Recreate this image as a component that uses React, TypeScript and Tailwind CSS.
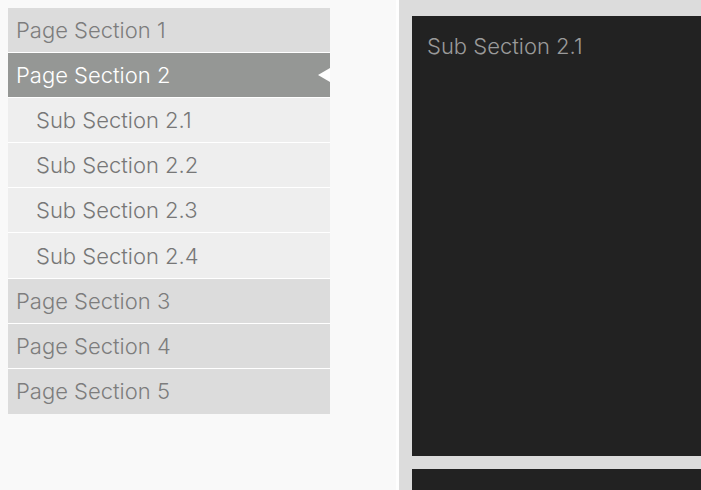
import React from "react";

const rows: { label: string; kind: "page" | "active" | "sub" }[] = [
  { label: "Page Section 1", kind: "page" },
  { label: "Page Section 2", kind: "active" },
  { label: "Sub Section 2.1", kind: "sub" },
  { label: "Sub Section 2.2", kind: "sub" },
  { label: "Sub Section 2.3", kind: "sub" },
  { label: "Sub Section 2.4", kind: "sub" },
  { label: "Page Section 3", kind: "page" },
  { label: "Page Section 4", kind: "page" },
  { label: "Page Section 5", kind: "page" },
];

export default function App() {
  return (
    <div
      className="flex w-[701px] h-[490px] overflow-hidden bg-[#f9f9f9]"
      style={{ fontFamily: "Inter, 'Noto Sans', sans-serif" }}
    >
      <div className="pt-2 pl-2 w-[330px] shrink-0">
        <ul className="flex flex-col">
          {rows.map((r) => (
            <li
              key={r.label}
              className={
                r.kind === "active"
                  ? "relative flex items-center h-[45.1px] border-b border-white bg-[#959795] text-white pl-2 text-[22px] font-light"
                  : r.kind === "sub"
                  ? "relative flex items-center h-[45.1px] border-b border-white bg-[#eeeeee] text-[#777777] pl-[28px] text-[22px] font-light"
                  : "relative flex items-center h-[45.1px] border-b border-white last:border-b-0 bg-[#dcdcdc] text-[#7d7d7d] pl-2 text-[22px] font-light"
              }
            >
              <span className="leading-[26px]">{r.label}</span>
              {r.kind === "active" && (
                <span className="absolute right-0 top-1/2 -translate-y-1/2 w-0 h-0 border-y-[7px] border-y-transparent border-r-[12px] border-r-white" />
              )}
            </li>
          ))}
        </ul>
      </div>
      <div className="ml-[66px] flex-1 border-l-[3px] border-[#fefefe] bg-[#dcdcdc] pl-[13px] pt-4 flex flex-col gap-[13px]">
        <div className="h-[440px] shrink-0 bg-[#222222] px-[15px] pt-[17px]">
          <div className="text-[22px] font-light text-[#9a9a9a] leading-[26px]">Sub Section 2.1</div>
        </div>
        <div className="h-[40px] shrink-0 bg-[#222222]" />
      </div>
    </div>
  );
}
